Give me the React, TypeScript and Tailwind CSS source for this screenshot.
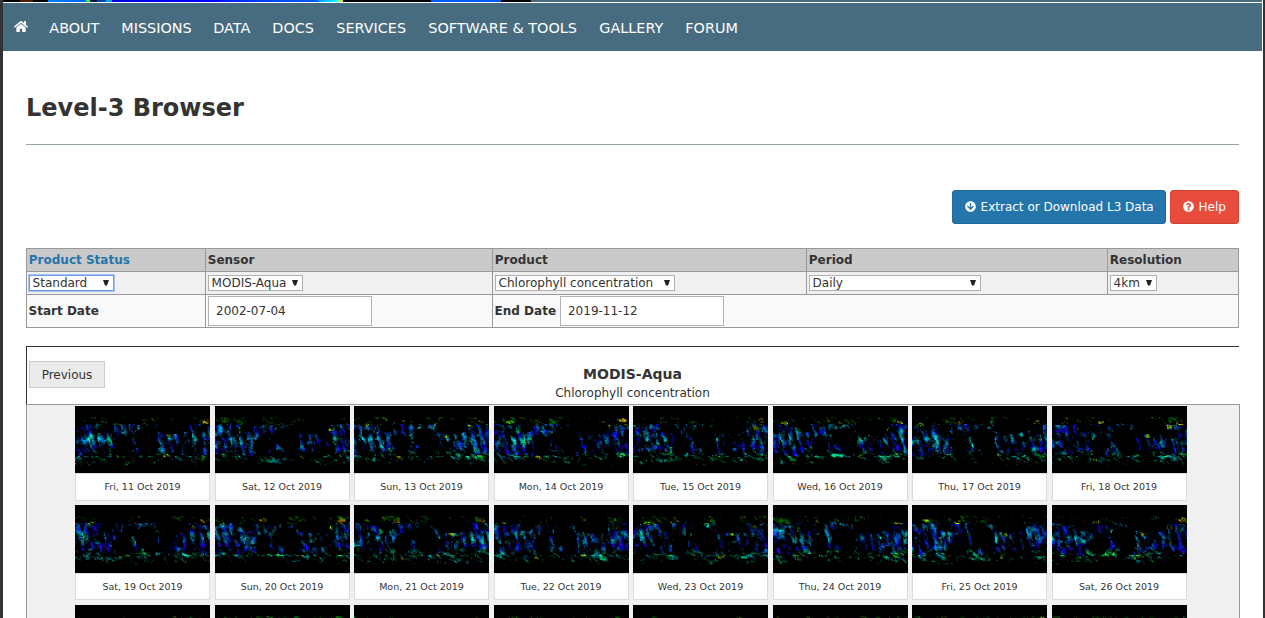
import { FaHome, FaArrowCircleDown, FaQuestionCircle } from "react-icons/fa";

const nav: [string, string][] = [
  ["ABOUT", "w-[72px]"],
  ["MISSIONS", "w-[92px]"],
  ["DATA", "w-[59px]"],
  ["DOCS", "w-[64px]"],
  ["SERVICES", "w-[92px]"],
  ["SOFTWARE & TOOLS", "w-[171px]"],
  ["GALLERY", "w-[86px]"],
  ["FORUM", "w-[60px]"],
];

const dates = [
  "Fri, 11 Oct 2019", "Sat, 12 Oct 2019", "Sun, 13 Oct 2019", "Mon, 14 Oct 2019",
  "Tue, 15 Oct 2019", "Wed, 16 Oct 2019", "Thu, 17 Oct 2019", "Fri, 18 Oct 2019",
  "Sat, 19 Oct 2019", "Sun, 20 Oct 2019", "Mon, 21 Oct 2019", "Tue, 22 Oct 2019",
  "Wed, 23 Oct 2019", "Thu, 24 Oct 2019", "Fri, 25 Oct 2019", "Sat, 26 Oct 2019",
  "", "", "", "", "", "", "", "",
];

function hash(x: number, y: number, seed: number) {
  let h = Math.imul(x, 374761393) ^ Math.imul(y, 668265263) ^ Math.imul(seed, 1274126177);
  h = Math.imul(h ^ (h >>> 13), 1103515245);
  h = Math.imul(h ^ (h >>> 16), 2246822519);
  return ((h ^ (h >>> 15)) >>> 0) / 4294967296;
}

function noise(x: number, y: number, seed: number) {
  const xi = Math.floor(x);
  const yi = Math.floor(y);
  const fx = x - xi;
  const fy = y - yi;
  const top = hash(xi, yi, seed) * (1 - fx) + hash(xi + 1, yi, seed) * fx;
  const bottom = hash(xi, yi + 1, seed) * (1 - fx) + hash(xi + 1, yi + 1, seed) * fx;
  return top * (1 - fy) + bottom * fy;
}

const ellipse = (x: number, y: number, cx: number, cy: number, rx: number, ry: number) =>
  Math.sqrt(((x - cx) / rx) ** 2 + ((y - cy) / ry) ** 2);

// Land masses: nothing is retrieved there.
function isLand(x: number, y: number) {
  return (
    ellipse(x, y, 47, 39, 8, 11) < 1 ||
    ellipse(x, y, 70, 31, 12, 10) < 1 ||
    ellipse(x, y, 75, 39, 8, 11) < 1 ||
    ellipse(x, y, 97, 21, 17, 7) < 1 ||
    ellipse(x, y, 32, 21, 7, 5) < 1 ||
    ellipse(x, y, 115, 44, 4, 4) < 1
  );
}

const blooms = [
  [47, 15, 3.5, 1.5, 62], [44, 51, 3, 1.5, 60], [60, 49, 6, 1.8, 150], [88, 50, 4, 1.4, 75],
  [118, 21, 4, 2, 80], [127, 15, 3.5, 2.5, 55], [126, 49, 5, 2.5, 140], [24, 23, 2, 4, 150],
  [38, 43, 1.6, 4, 150], [95, 29, 2.5, 1.6, 80], [13, 16, 4, 1.6, 90], [110, 51, 4, 2, 165],
];

function Chlorophyll({ seed }: { seed: number }) {
  const groups = new Map<string, string>();
  const step = 1.15;
  const phase = hash(seed, 3, 9) * 9;
  const spots = blooms.map(([x, y, rx, ry, hue], k) => ({
    x: x + hash(seed, k, 21) * 8 - 4,
    y: y + hash(seed, k, 22) * 3 - 1,
    rx, ry, hue,
    power: hash(seed, k, 23),
  }));
  for (let y = 11; y < 59; y += step) {
    for (let x = 0; x < 135; x += step) {
      if (isLand(x, y)) continue;
      const u = x - y * 0.25;
      const swath = Math.cos(((u + phase) / 8.6) * Math.PI * 2);
      const edge = (noise(x / 8, 1, seed + 60) - 0.5) * 8;
      const north = 18 + edge * 0.4;
      const south = 46 + edge;
      const flat = y < north || y > south;
      const n = flat
        ? noise((x - y) / 2.6, y / 2, seed + 40)
        : noise(u / 1.8, y / 3.6, seed + 40);
      const grain = hash(Math.round(x * 4), Math.round(y * 4), seed);
      const patch = noise(x / 10, y / 7, seed + 80);
      const shade = noise(x / 4, y / 4, seed + 120);
      let value = n * 0.8 + grain * 0.3 + patch * 0.4;
      let hue: number;
      let threshold: number;
      let dim = 1;
      if (y < north) {
        hue = 65 + shade * 95;
        threshold = 1.0 - (x > 115 ? 0.05 : 0);
        dim = 0.75;
      } else if (y < south) {
        const band = y < 28 ? 222 : y < 38 ? 208 : 228;
        hue = band + (shade - 0.5) * 90 - (patch - 0.5) * 30;
        threshold = 0.83 - swath * 0.15 - (x < 36 || x > 117 ? 0.08 : 0);
      } else {
        hue = 168 + (shade - 0.5) * 80;
        threshold = 0.87 + Math.max(0, y - 52) * 0.04;
        dim = 0.9;
      }
      const coast = Math.abs(ellipse(x, y, 70, 32, 13.5, 13) - 1);
      if (y < 30 && coast < 0.09) {
        hue = 190 + (shade - 0.5) * 60;
        threshold = 0.87;
      }
      for (const s of spots) {
        if (s.power > 0.35 && ellipse(x, y, s.x, s.y, s.rx, s.ry) < 1) {
          hue = s.hue + (shade - 0.5) * 40;
          threshold = 0.9 - s.power * 0.14;
          value += 0.1;
          dim = 1;
        }
      }
      const excess = value - threshold;
      if (excess <= 0) continue;
      const level = Math.min(5, 1 + Math.floor(excess * 12)) * dim;
      const h = Math.round(Math.min(250, hue) / 10) * 10;
      const light = h > 215 ? level * 9.5 : level * 9;
      const color = `hsl(${h} 95% ${Math.round(light + 2)}%)`;
      groups.set(
        color,
        (groups.get(color) ?? "") + `M${x.toFixed(2)} ${y.toFixed(2)}h1.2v1.2h-1.2z`,
      );
    }
  }
  return (
    <svg viewBox="0 0 135 67.5" preserveAspectRatio="none" className="block h-[67.5px] w-[135px] bg-black">
      {[...groups].map(([color, d]) => (
        <path key={color} d={d} fill={color} />
      ))}
    </svg>
  );
}

function Select({ label, className }: { label: string; className: string }) {
  return (
    <button className={`flex h-4 items-center justify-between border bg-white pl-[2.6px] pr-1 text-left ${className}`}>
      <span>{label}</span>
      <svg viewBox="0 0 6 6" className="h-[6px] w-[6px]"><path d="M0 0h6L4 5.6H2Z" fill="#222" /></svg>
    </button>
  );
}

const head = "border-l border-t border-[#999] bg-[#cacaca] pl-[1.8px] pt-[2px] leading-[18px] font-bold";
const cell = "flex items-center border-l border-t border-[#999] bg-[#f0f0f0] pl-[2px]";

export default function App() {
  return (
    <div className="h-[618px] w-[1265px] overflow-hidden border-l-[3px] border-r-2 border-[#333] bg-white font-['DejaVu_Sans',sans-serif] text-[12px] text-[#333]">
      <div className="mr-px flex h-[2px] bg-[#486c7f]">
        <div className="w-[17px] bg-black" />
        <div className="w-[13px] bg-[#4a2000]" />
        <div className="w-[15px] bg-black" />
        <div className="w-[38px] bg-linear-to-r from-[#0080ff] to-[#0060ff]" />
        <div className="w-[4px] bg-[#20f060]" />
        <div className="w-[7px] bg-[#001838]" />
        <div className="w-[9px] bg-[#0040c0]" />
        <div className="w-[6px] bg-[#00b0d0]" />
        <div className="w-[206px] bg-linear-to-r from-[#0000e0] via-[#0000ff] to-[#0060ff]" />
        <div className="w-[19px] bg-linear-to-r from-[#0090ff] to-[#00ffff]" />
        <div className="w-[6px] bg-linear-to-r from-[#40ff90] to-[#f0d000]" />
        <div className="w-[88px] bg-black" />
        <div className="w-[70px] bg-[#0058ff]" />
        <div className="w-[30px] bg-black" />
      </div>
      <nav className="mr-px mt-px flex h-12 items-center bg-[#486c7f] pt-[3px] pl-[11px] text-[14.4px] text-white">
        <FaHome className="mr-[21.3px] mb-[4px] h-[13px] w-[14px] shrink-0" />
        {nav.map(([label, width]) => (
          <a key={label} className={`shrink-0 whitespace-nowrap ${width}`}>{label}</a>
        ))}
      </nav>
      <main className="ml-[23px] w-[1213px]">
        <h1 className="h-[94px] border-b border-[#95a5a6] pt-[41px] text-[24px] leading-8 font-bold">Level-3 Browser</h1>
        <div className="mt-[45px] flex justify-end gap-1 text-white">
          <button className="flex h-[34px] w-[214px] items-center gap-[4.6px] rounded-[3px] border border-[#20699b] bg-[#2475ab] pl-3">
            <FaArrowCircleDown className="mb-px h-[11px] w-[11px]" />
            <span>Extract or Download L3 Data</span>
          </button>
          <button className="flex h-[34px] w-[69px] items-center gap-[4.6px] rounded-[3px] border border-[#cf4436] bg-[#e74c3c] pl-3">
            <FaQuestionCircle className="mb-px h-[11px] w-[11px]" />
            <span>Help</span>
          </button>
        </div>
        <div className="mt-6 grid grid-cols-[179px_287px_314px_301px_131px] grid-rows-[23px_23px_33px] border-r border-b border-[#999]">
          <div className={`${head} text-[#2475ab]`}>Product Status</div>
          <div className={head}>Sensor</div>
          <div className={head}>Product</div>
          <div className={head}>Period</div>
          <div className={head}>Resolution</div>
          <div className={cell}><Select label="Standard" className="w-[85px] border-[#6d9be8] ring-1 ring-[#a5c3f5]" /></div>
          <div className={cell}><Select label="MODIS-Aqua" className="w-[95px] border-[#b0b0b0]" /></div>
          <div className={cell}><Select label="Chlorophyll concentration" className="w-[180px] border-[#b0b0b0]" /></div>
          <div className={cell}><Select label="Daily" className="w-[172px] border-[#b0b0b0]" /></div>
          <div className={cell}><Select label="4km" className="w-[47px] border-[#b0b0b0]" /></div>
          <div className="flex items-center border-l border-t border-[#999] bg-[#f9f9f9] pl-[1.6px] font-bold">Start Date</div>
          <div className="flex items-center border-l border-t border-[#999] bg-[#f9f9f9] pl-[2px]">
            <div className="flex h-[30px] w-[164px] items-center border border-[#b3b3b3] bg-white pl-[7px]">2002-07-04</div>
          </div>
          <div className="col-span-3 flex items-center border-l border-t border-[#999] bg-[#f9f9f9] pl-[1.6px]">
            <b className="w-[65.4px]">End Date</b>
            <div className="flex h-[30px] w-[164px] items-center border border-[#b3b3b3] bg-white pl-[7px]">2019-11-12</div>
          </div>
        </div>
        <div className="mt-[18px] grid h-[58px] grid-cols-[1fr_auto_1fr] border-l border-t border-[#333]">
          <button className="mt-[14px] ml-[2px] h-[27px] w-[76px] border border-[#ccc] bg-[#ebebeb]">Previous</button>
          <div className="pt-[18px] pr-px text-center">
            <div className="text-[14px] leading-[18px] font-bold">MODIS-Aqua</div>
            <div className="pt-px leading-[18px]">Chlorophyll concentration</div>
          </div>
        </div>
        <div className="grid w-[1214px] grid-cols-[repeat(8,135px)] gap-[4.5px] border border-[#999] bg-[#f0f0f0] pt-[0.5px] pl-12">
          {dates.map((date, i) => (
            <div key={i} className="h-[95px]">
              <Chlorophyll seed={i + 1} />
              <div className="flex h-[27.5px] items-center justify-center border border-[#d9dddd] bg-white pt-[1.5px] text-[9.49px]">{date}</div>
            </div>
          ))}
        </div>
      </main>
    </div>
  );
}
